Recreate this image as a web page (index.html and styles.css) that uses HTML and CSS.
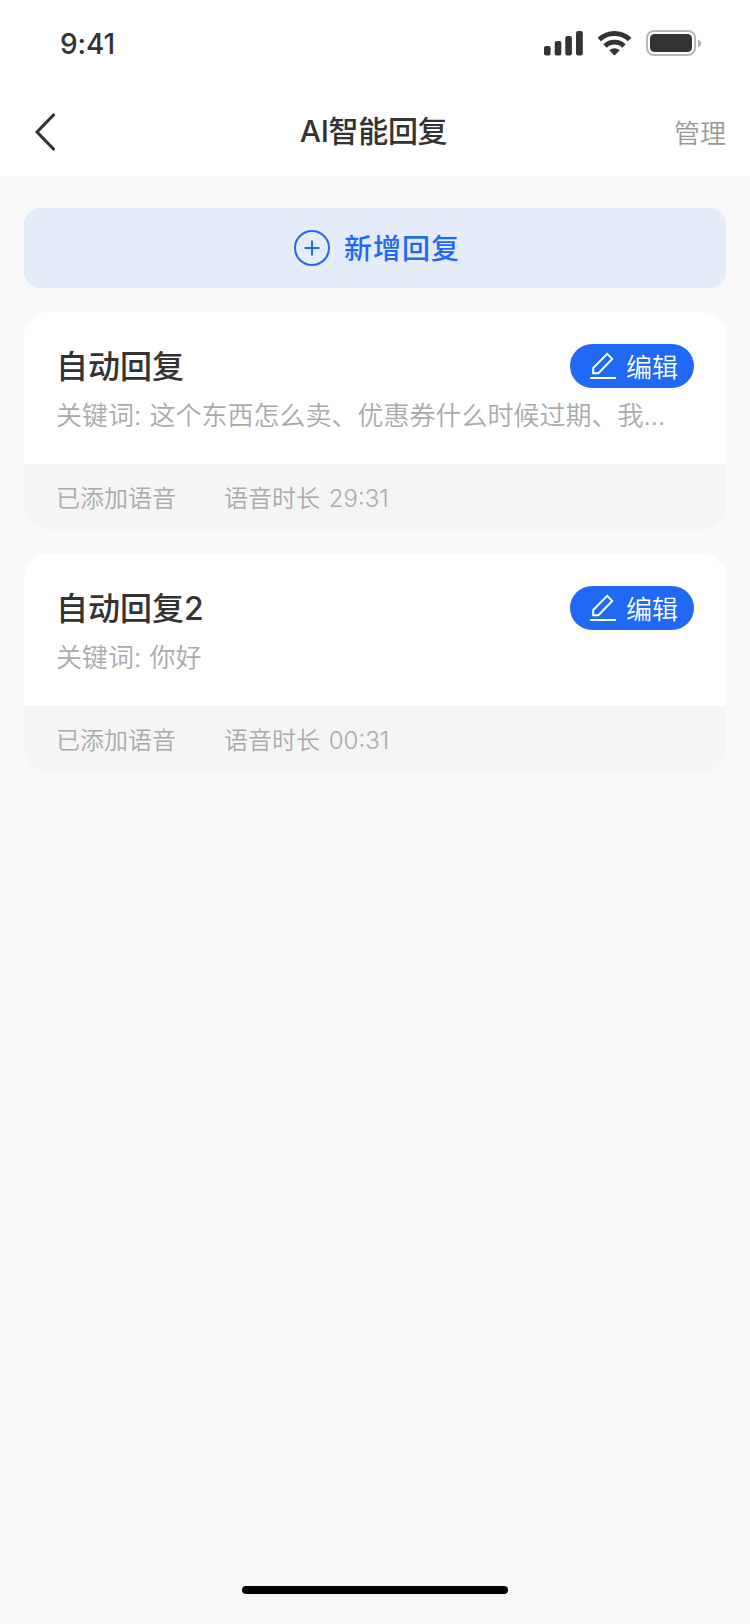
FILE: index.html
```
<!DOCTYPE html>
<html lang="zh-CN">
<head>
    <meta charset="UTF-8">
    <meta name="viewport" content="width=device-width, initial-scale=1.0">
    <title>AI智能回复</title>
    <link rel="stylesheet" href="styles.css">
</head>
<body>

<div class="page">
    <div class="status-bar">
        <span class="time">9:41</span>
        <div class="status-icons">
            <svg class="signal" width="39" height="26" viewBox="0 0 39 26" fill="#333">
                <rect x="0" y="16" width="6.6" height="9.6" rx="2"/>
                <rect x="10.7" y="11" width="6.6" height="14.6" rx="2"/>
                <rect x="21.3" y="6" width="6.6" height="19.6" rx="2"/>
                <rect x="32" y="1" width="6.8" height="24.6" rx="2"/>
            </svg>
            <svg class="wifi" width="36" height="26" viewBox="0 0 36 26">
                <g fill="none" stroke="#333" stroke-width="4.8">
                    <path d="M2.3 9.6a22 22 0 0 1 30.4 0"/>
                    <path d="M8 15.9a13.8 13.8 0 0 1 19 0"/>
                </g>
                <path fill="#333" d="M12.3 20.2a7.6 7.6 0 0 1 10.4 0l-4.6 4.9q-.6.6-1.2 0z"/>
            </svg>
            <svg class="battery" width="55" height="26" viewBox="0 0 55 26">
                <rect x="1" y="1" width="48" height="24" rx="7" fill="none" stroke="#b8b8b8" stroke-width="2"/>
                <rect x="4" y="4" width="42" height="18" rx="4.5" fill="#333"/>
                <path fill="#b0b0b0" d="M52 9.5q3 1.2 3 4t-3 4z"/>
            </svg>
        </div>
    </div>

    <div class="nav-bar">
        <svg class="back" width="22" height="38" viewBox="0 0 22 38">
            <path d="M19.5 2L3 19L19.5 36" fill="none" stroke="#333" stroke-width="3.2" stroke-linecap="round" stroke-linejoin="round"/>
        </svg>
        <h1>AI智能回复</h1>
        <span class="manage">管理</span>
    </div>

    <div class="content">
        <button class="add-btn">
            <svg width="36" height="36" viewBox="0 0 36 36" fill="none" stroke="#1f69f5" stroke-width="2">
                <circle cx="18" cy="18" r="17"/>
                <path d="M10.5 18h15M18 10.5v15"/>
            </svg>
            <span>新增回复</span>
        </button>

        <div class="card">
            <div class="card-body">
                <div class="card-head">
                    <h2>自动回复</h2>
                    <button class="edit-btn">
                        <svg width="26" height="28" viewBox="0 0 26 28" fill="none" stroke="#fff" stroke-width="2">
                            <path d="M3.2 21.2v-5.2L17.2 1.9l5 5L8.4 21.2z"/>
                            <path d="M0 26h26"/>
                        </svg>
                        <span>编辑</span>
                    </button>
                </div>
                <p class="keywords">关键词: 这个东西怎么卖、优惠券什么时候过期、我...</p>
            </div>
            <div class="card-foot">
                <span>已添加语音</span>
                <span>语音时长 29:31</span>
            </div>
        </div>

        <div class="card">
            <div class="card-body">
                <div class="card-head">
                    <h2>自动回复2</h2>
                    <button class="edit-btn">
                        <svg width="26" height="28" viewBox="0 0 26 28" fill="none" stroke="#fff" stroke-width="2">
                            <path d="M3.2 21.2v-5.2L17.2 1.9l5 5L8.4 21.2z"/>
                            <path d="M0 26h26"/>
                        </svg>
                        <span>编辑</span>
                    </button>
                </div>
                <p class="keywords">关键词: 你好</p>
            </div>
            <div class="card-foot">
                <span>已添加语音</span>
                <span>语音时长 00:31</span>
            </div>
        </div>
    </div>

    <div class="home-indicator"></div>
</div>

</body>
</html>
```

FILE: styles.css
```
* {
    box-sizing: border-box;
}
body {
    margin: 0;
    font-family: "Liberation Sans", "Noto Sans CJK SC", sans-serif;
    background-color: #f9f9f9;
    color: #333;
}
h1, h2, p {
    margin: 0;
}
button {
    border: none;
    padding: 0;
    font-family: inherit;
    cursor: pointer;
}
svg {
    display: block;
    flex: none;
}
.page {
    display: flex;
    flex-direction: column;
    width: 750px;
    height: 1624px;
}

/* Status bar */
.status-bar {
    display: flex;
    justify-content: space-between;
    height: 88px;
    padding: 30px 49px 0 60px;
    background-color: #fff;
}
.time {
    font-family: Inter, sans-serif;
    font-size: 28px;
    font-weight: 500;
    line-height: 28px;
    letter-spacing: -0.1px;
}
.status-icons {
    display: flex;
}
.wifi {
    margin-left: 14px;
}
.battery {
    margin-left: 13px;
}

/* Navigation bar */
.nav-bar {
    display: grid;
    grid-template-columns: 1fr auto 1fr;
    align-items: center;
    height: 88px;
    padding: 0 24px;
    background-color: #fff;
}
.back {
    margin-left: 10px;
}
.nav-bar h1 {
    padding: 0 3px 2px 0;
    font-family: Inter, "Noto Sans CJK SC", sans-serif;
    font-size: 30px;
    font-weight: 500;
    line-height: 44px;
    letter-spacing: -0.3px;
}
.manage {
    justify-self: end;
    padding-bottom: 2px;
    font-size: 26px;
    font-weight: 350;
    color: #999;
}

/* Content */
.content {
    display: flex;
    flex: 1;
    flex-direction: column;
    gap: 24px;
    padding: 32px 24px 0;
}
.add-btn {
    display: flex;
    align-items: center;
    justify-content: center;
    gap: 14px;
    height: 80px;
    padding-left: 4px;
    border-radius: 16px;
    background-color: #e4ebf9;
    color: #1f69f5;
    font-size: 28px;
    font-weight: 500;
    letter-spacing: 1px;
}
.add-btn span {
    padding-bottom: 2px;
}
.card {
    overflow: hidden;
    border-radius: 24px;
    background-color: #fff;
}
.card-body {
    height: 152px;
    padding: 32px 32px 0;
}
.card-head {
    display: flex;
    align-items: flex-start;
    justify-content: space-between;
    height: 44px;
}
.card-head h2 {
    padding-top: 1px;
    font-family: Inter, "Noto Sans CJK SC", sans-serif;
    font-size: 32px;
    font-weight: 500;
    line-height: 44px;
}
.edit-btn {
    display: flex;
    align-items: center;
    gap: 10px;
    width: 124px;
    height: 44px;
    padding-left: 20px;
    border-radius: 22px;
    background-color: #1f69f5;
    color: #fff;
    font-size: 26px;
    font-weight: 350;
}
.edit-btn span {
    padding-bottom: 2px;
}
.keywords {
    margin-top: 9px;
    font-size: 26px;
    font-weight: 350;
    line-height: 38px;
    color: #aaa;
    white-space: nowrap;
    word-spacing: 1px;
}
.card-foot {
    display: flex;
    align-items: center;
    gap: 48px;
    height: 66px;
    padding: 0 32px 2px;
    background-color: #f5f5f5;
    font-family: Inter, "Noto Sans CJK SC", sans-serif;
    font-size: 24px;
    font-weight: 350;
    color: #aaa;
    word-spacing: 2px;
}

.home-indicator {
    align-self: center;
    width: 266px;
    height: 8px;
    margin-bottom: 30px;
    border-radius: 4px;
    background-color: #000;
}
```
